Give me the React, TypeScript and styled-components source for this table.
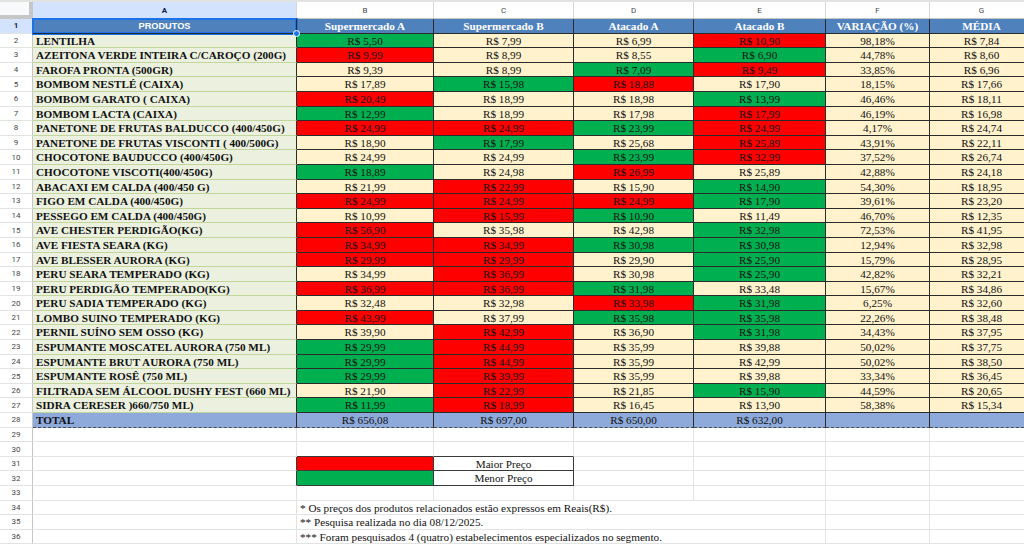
import React from 'react';
import styled, { createGlobalStyle, css } from 'styled-components';

const Global = createGlobalStyle`
  html, body { margin: 0; padding: 0; background: #ffffff; overflow: hidden; }
  body { width: 1024px; height: 544px; }
  * { box-sizing: border-box; }
`;

const SERIF = `"Liberation Serif", "Times New Roman", serif`;
const SANS = `"Liberation Sans", Arial, sans-serif`;
const UI = `Roboto, "Liberation Sans", Arial, sans-serif`;

const TONES: Record<string, string> = { g: '#00b050', r: '#ff0000', c: '#fff2cc' };
const DARK = '#2b2b2b';
const GRID = '#e2e3e3';

const Page = styled.div`
  width: 1024px;
  height: 544px;
  overflow: hidden;
  display: flex;
  flex-direction: column;
  background: #fff;
`;

const TopStrip = styled.div`
  height: 2px;
  flex: 0 0 2px;
  background: #e1e3e1;
`;

const Grid = styled.div`
  display: grid;
  grid-template-columns: 33px 264px 137px 140px 120px 132px 104px 104px;
  grid-template-rows: 17px repeat(36, 14.6px);
`;

const Corner = styled.div`
  background: #f8f9fa;
  border-right: 4px solid #c4c7c5;
  border-bottom: 4px solid #c4c7c5;
`;

const ColHead = styled.div<{ $active?: boolean }>`
  display: flex;
  align-items: center;
  justify-content: center;
  font: 8px ${UI};
  color: #444746;
  background: #ffffff;
  border-right: 1px solid #d5d7d6;
  border-bottom: 1px solid #c4c7c5;
  ${(p) =>
    p.$active &&
    css`
      background: #d3e3fd;
      color: #0b1f44;
      font-weight: 700;
    `}
`;

const RowHead = styled.div<{ $active?: boolean }>`
  display: flex;
  align-items: center;
  justify-content: center;
  font: 8px ${UI};
  color: #444746;
  background: #ffffff;
  border-right: 1px solid #c4c7c5;
  border-bottom: 1px solid #e1e3e1;
  ${(p) =>
    p.$active &&
    css`
      background: #d3e3fd;
      color: #0b1f44;
      font-weight: 700;
    `}
`;

const HeadCell = styled.div<{ $sans?: boolean; $selected?: boolean }>`
  position: relative;
  display: flex;
  align-items: flex-end;
  justify-content: center;
  background: #4f81bd;
  color: #ffffff;
  font: 700 11.2px/12.6px ${SERIF};
  white-space: nowrap;
  border-right: 1px solid ${DARK};
  border-bottom: 1px solid ${DARK};
  ${(p) =>
    p.$sans &&
    css`
      font: 700 9.2px/12px ${SANS};
      padding-bottom: 0.5px;
    `}
  ${(p) =>
    p.$selected &&
    css`
      box-shadow: inset 0 0 0 1px #1a73e8, 0 0 0 1px #1a73e8;
      z-index: 2;
    `}
`;

const FillHandle = styled.span`
  position: absolute;
  right: -4px;
  bottom: -4px;
  width: 7px;
  height: 7px;
  border-radius: 50%;
  background: #1a73e8;
  border: 1px solid #ffffff;
`;

const ProductCell = styled.div`
  display: flex;
  align-items: flex-end;
  padding-left: 3px;
  background: #ebf1de;
  color: #111;
  font: 700 11.2px/12.6px ${SERIF};
  white-space: nowrap;
  overflow: hidden;
  border-right: 1px solid ${DARK};
  border-bottom: 1px solid #c2d69b;
`;

const PriceCell = styled.div<{ $tone: string }>`
  display: flex;
  align-items: flex-end;
  justify-content: center;
  background: ${(p) => TONES[p.$tone]};
  color: #111;
  font: 11.2px/12.6px ${SERIF};
  white-space: nowrap;
  border-right: 1px solid ${DARK};
  border-bottom: 1px solid ${DARK};
`;

const TotalCell = styled.div<{ $label?: boolean }>`
  display: flex;
  align-items: flex-end;
  justify-content: ${(p) => (p.$label ? 'flex-start' : 'center')};
  padding-left: ${(p) => (p.$label ? '3px' : '0')};
  background: #8eaadb;
  color: #111;
  font: ${(p) => (p.$label ? 700 : 400)} 11.2px/12.6px ${SERIF};
  white-space: nowrap;
  border-right: 1px solid ${DARK};
  border-bottom: 1px dashed #4a4a4a;
`;

const Blank = styled.div<{ $edgeRight?: boolean; $edgeBottom?: boolean }>`
  background: #ffffff;
  border-right: 1px solid ${(p) => (p.$edgeRight ? '#3a3a3a' : GRID)};
  border-bottom: 1px solid ${(p) => (p.$edgeBottom ? '#3a3a3a' : GRID)};
`;

const Swatch = styled.div<{ $tone: string }>`
  background: ${(p) => TONES[p.$tone]};
  border-right: 1px solid #3a3a3a;
  border-bottom: 1px solid #3a3a3a;
`;

const LegendLabel = styled.div`
  display: flex;
  align-items: flex-end;
  justify-content: center;
  background: #ffffff;
  color: #111;
  font: 11.2px/12.6px ${SERIF};
  border-right: 1px solid #3a3a3a;
  border-bottom: 1px solid #3a3a3a;
`;

const Note = styled.div<{ $span: number }>`
  grid-column: span ${(p) => p.$span};
  display: flex;
  align-items: flex-end;
  padding-left: 3px;
  background: #ffffff;
  color: #111;
  font: 11.2px/12.6px ${SERIF};
  white-space: nowrap;
  border-right: 1px solid ${GRID};
  border-bottom: 1px solid ${GRID};
`;

const COLS = ['A', 'B', 'C', 'D', 'E', 'F', 'G'];
const HEADS = ['Supermercado A', 'Supermercado B', 'Atacado A', 'Atacado B', 'VARIAÇÃO (%)', 'MÉDIA'];

const DATA: [string, string, string, string, string][] = [
  ['LENTILHA', '5,50|7,99|6,99|10,90', 'gccr', '98,18%', '7,84'],
  ['AZEITONA VERDE INTEIRA C/CAROÇO (200G)', '9,99|8,99|8,55|6,90', 'rccg', '44,78%', '8,60'],
  ['FAROFA PRONTA (500GR)', '9,39|8,99|7,09|9,49', 'ccgr', '33,85%', '6,96'],
  ['BOMBOM NESTLÉ (CAIXA)', '17,89|15,98|18,88|17,90', 'cgrc', '18,15%', '17,66'],
  ['BOMBOM GARATO ( CAIXA)', '20,49|18,99|18,98|13,99', 'rccg', '46,46%', '18,11'],
  ['BOMBOM LACTA (CAIXA)', '12,99|18,99|17,98|17,99', 'gccr', '46,19%', '16,98'],
  ['PANETONE DE FRUTAS BALDUCCO (400/450G)', '24,99|24,99|23,99|24,99', 'rrgr', '4,17%', '24,74'],
  ['PANETONE DE FRUTAS VISCONTI ( 400/500G)', '18,90|17,99|25,68|25,89', 'cgcr', '43,91%', '22,11'],
  ['CHOCOTONE BAUDUCCO (400/450G)', '24,99|24,99|23,99|32,99', 'ccgr', '37,52%', '26,74'],
  ['CHOCOTONE VISCOTI(400/450G)', '18,89|24,98|26,99|25,89', 'gcrc', '42,88%', '24,18'],
  ['ABACAXI EM CALDA (400/450 G)', '21,99|22,99|15,90|14,90', 'crcg', '54,30%', '18,95'],
  ['FIGO EM CALDA (400/450G)', '24,99|24,99|24,99|17,90', 'rrrg', '39,61%', '23,20'],
  ['PESSEGO EM CALDA (400/450G)', '10,99|15,99|10,90|11,49', 'crgc', '46,70%', '12,35'],
  ['AVE CHESTER PERDIGÃO(KG)', '56,90|35,98|42,98|32,98', 'rccg', '72,53%', '41,95'],
  ['AVE FIESTA SEARA (KG)', '34,99|34,99|30,98|30,98', 'rrgg', '12,94%', '32,98'],
  ['AVE BLESSER AURORA (KG)', '29,99|29,99|29,90|25,90', 'rrcg', '15,79%', '28,95'],
  ['PERU SEARA TEMPERADO (KG)', '34,99|36,99|30,98|25,90', 'crcg', '42,82%', '32,21'],
  ['PERU PERDIGÃO TEMPERADO(KG)', '36,99|36,99|31,98|33,48', 'rrgc', '15,67%', '34,86'],
  ['PERU SADIA TEMPERADO (KG)', '32,48|32,98|33,98|31,98', 'ccrg', '6,25%', '32,60'],
  ['LOMBO SUINO TEMPERADO (KG)', '43,99|37,99|35,98|35,98', 'rcgg', '22,26%', '38,48'],
  ['PERNIL SUÍNO SEM OSSO (KG)', '39,90|42,99|36,90|31,98', 'crcg', '34,43%', '37,95'],
  ['ESPUMANTE MOSCATEL AURORA (750 ML)', '29,99|44,99|35,99|39,88', 'grcc', '50,02%', '37,75'],
  ['ESPUMANTE BRUT AURORA (750 ML)', '29,99|44,99|35,99|42,99', 'grcc', '50,02%', '38,50'],
  ['ESPUMANTE ROSÊ (750 ML)', '29,99|39,99|35,99|39,88', 'grcc', '33,34%', '36,45'],
  ['FILTRADA SEM ÁLCOOL DUSHY FEST (660 ML)', '21,90|22,99|21,85|15,90', 'crcg', '44,59%', '20,65'],
  ['SIDRA CERESER )660/750 ML)', '11,99|18,99|16,45|13,90', 'grcc', '58,38%', '15,34'],
];

const TOTALS = ['656,08', '697,00', '650,00', '632,00', '', ''];

const NOTES = [
  '* Os preços dos produtos relacionados estão expressos em Reais(R$).',
  '** Pesquisa realizada no dia 08/12/2025.',
  '*** Foram pesquisados 4 (quatro) estabelecimentos especializados no segmento.',
];

export default function App() {
  return (
    <Page>
      <Global />
      <TopStrip />
      <Grid>
        <Corner />
        {COLS.map((c) => (
          <ColHead key={c} $active={c === 'A'}>
            {c}
          </ColHead>
        ))}

        <RowHead $active>1</RowHead>
        <HeadCell $sans $selected>
          PRODUTOS
          <FillHandle />
        </HeadCell>
        {HEADS.map((h) => (
          <HeadCell key={h}>{h}</HeadCell>
        ))}

        {DATA.map(([name, prices, tones, v, m], i) => (
          <React.Fragment key={name}>
            <RowHead>{i + 2}</RowHead>
            <ProductCell>{name}</ProductCell>
            {prices.split('|').map((p, j) => (
              <PriceCell key={j} $tone={tones[j]}>
                R$ {p}
              </PriceCell>
            ))}
            <PriceCell $tone="c">{v}</PriceCell>
            <PriceCell $tone="c">R$ {m}</PriceCell>
          </React.Fragment>
        ))}

        <RowHead>28</RowHead>
        <TotalCell $label>TOTAL</TotalCell>
        {TOTALS.map((t, j) => (
          <TotalCell key={j}>{t ? `R$ ${t}` : ''}</TotalCell>
        ))}

        {[29, 30].map((r) => (
          <React.Fragment key={r}>
            <RowHead>{r}</RowHead>
            {COLS.map((c) => (
              <Blank key={c} $edgeBottom={r === 30 && (c === 'B' || c === 'C')} />
            ))}
          </React.Fragment>
        ))}

        {[
          [31, 'r', 'Maior Preço'],
          [32, 'g', 'Menor Preço'],
        ].map(([r, tone, label]) => (
          <React.Fragment key={r as number}>
            <RowHead>{r}</RowHead>
            <Blank $edgeRight />
            <Swatch $tone={tone as string} />
            <LegendLabel>{label}</LegendLabel>
            <Blank />
            <Blank />
            <Blank />
            <Blank />
          </React.Fragment>
        ))}

        <RowHead>33</RowHead>
        {COLS.map((c) => (
          <Blank key={c} />
        ))}

        {NOTES.map((n, i) => (
          <React.Fragment key={i}>
            <RowHead>{34 + i}</RowHead>
            <Blank />
            <Note $span={4}>{n}</Note>
            <Blank />
            <Blank />
          </React.Fragment>
        ))}
      </Grid>
    </Page>
  );
}
